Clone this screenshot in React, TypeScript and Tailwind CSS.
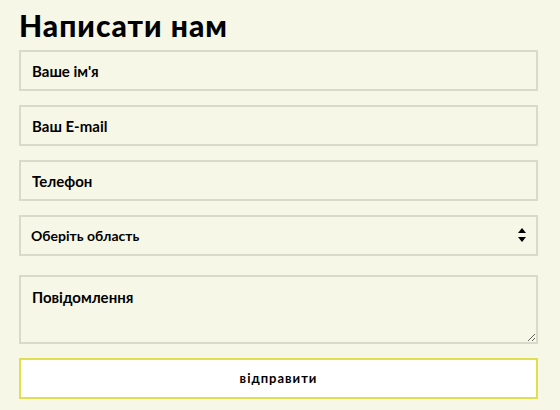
import React from "react";

export default function App() {
  const font = { fontFamily: "Lato, 'Noto Sans', sans-serif" };
  const field =
    "block w-full h-[41px] border-2 border-[#dadacb] bg-[#f7f7e7] px-[11px] text-[15px] font-bold text-black placeholder:text-black outline-none";
  return (
    <div className="w-[560px] h-[410px] bg-[#f7f7e7] overflow-hidden" style={font}>
      <div className="pl-[19px] pr-[22px] pt-[7px]">
        <h1 className="text-[30px] font-black leading-[36px] text-black tracking-[1px]">Написати нам</h1>
        <div className="mt-[7px] flex flex-col gap-[14px]">
          <input className={field} placeholder="Ваше ім'я" />
          <input className={field} placeholder="Ваш E-mail" />
          <input className={field} placeholder="Телефон" />
          <div className="relative">
            <select
              className="block w-full h-[41px] appearance-none border-2 border-[#dadacb] bg-[#f7f7e7] px-[10px] text-[14px] font-bold text-black outline-none"
              defaultValue=""
            >
              <option value="">Оберіть область</option>
            </select>
            <svg
              className="pointer-events-none absolute right-[12px] top-[13px]"
              width="8"
              height="14"
              viewBox="0 0 8 14"
            >
              <path d="M4 0 L8 5 L0 5 Z" fill="#000" />
              <path d="M0 9 L8 9 L4 14 Z" fill="#000" />
            </svg>
          </div>
          <textarea
            className="mt-[5px] block w-full h-[69px] border-2 border-[#dadacb] bg-[#f7f7e7] px-[11px] pt-[9px] text-[15px] font-bold text-black placeholder:text-black outline-none"
            placeholder="Повідомлення"
          />
          <button className="block w-full h-[41px] border-2 border-[#dfdf4f] bg-white text-[13px] font-bold tracking-[1px] text-black">
            відправити
          </button>
        </div>
      </div>
    </div>
  );
}
